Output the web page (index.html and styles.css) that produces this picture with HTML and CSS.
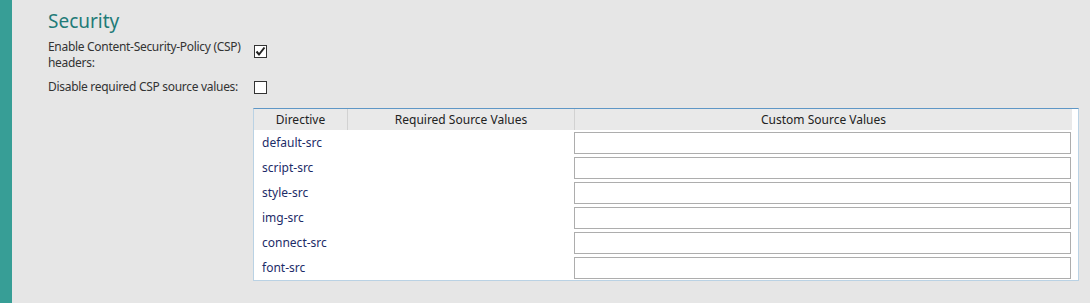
FILE: index.html
```html
<!DOCTYPE html>
<html lang="en">
    <head>
        <meta charset="UTF-8" />
        <meta name="viewport" content="width=device-width, initial-scale=1.0" />
        <title>Security</title>
        <link rel="stylesheet" href="styles.css">
    </head>
    <body>
        <div class="page">
            <div class="stripe"></div>
            <div class="content">
                <h2 class="title">Security</h2>

                <div class="field">
                    <label class="field-label" for="csp-enable">Enable Content-Security-Policy (CSP) headers:</label>
                    <span class="check checked" id="csp-enable">
                        <svg width="11" height="11" viewBox="0 0 11 11">
                            <path d="M1.5 5.5 L4 8.5 L9.5 1.5" fill="none" stroke="#222" stroke-width="2"/>
                        </svg>
                    </span>
                </div>

                <div class="field">
                    <label class="field-label" for="csp-disable">Disable required CSP source values:</label>
                    <span class="check" id="csp-disable"></span>
                </div>

                <div class="grid">
                    <div class="grid-head">
                        <div class="col-directive">Directive</div>
                        <div class="col-required">Required Source Values</div>
                        <div class="col-custom">Custom Source Values</div>
                    </div>
                    <div class="grid-row">
                        <div class="col-directive">default-src</div>
                        <div class="col-required"></div>
                        <div class="col-custom"><input type="text" class="source-input"></div>
                    </div>
                    <div class="grid-row">
                        <div class="col-directive">script-src</div>
                        <div class="col-required"></div>
                        <div class="col-custom"><input type="text" class="source-input"></div>
                    </div>
                    <div class="grid-row">
                        <div class="col-directive">style-src</div>
                        <div class="col-required"></div>
                        <div class="col-custom"><input type="text" class="source-input"></div>
                    </div>
                    <div class="grid-row">
                        <div class="col-directive">img-src</div>
                        <div class="col-required"></div>
                        <div class="col-custom"><input type="text" class="source-input"></div>
                    </div>
                    <div class="grid-row">
                        <div class="col-directive">connect-src</div>
                        <div class="col-required"></div>
                        <div class="col-custom"><input type="text" class="source-input"></div>
                    </div>
                    <div class="grid-row">
                        <div class="col-directive">font-src</div>
                        <div class="col-required"></div>
                        <div class="col-custom"><input type="text" class="source-input"></div>
                    </div>
                </div>
            </div>
        </div>
    </body>
</html>
```

FILE: styles.css
```css
body {
    margin: 0;
    background-color: #e6e6e6;
    font-family: "Noto Sans", Arial, sans-serif;
    font-size: 12px;
    color: #333;
}

.page {
    display: flex;
    height: 303px;
}

.stripe {
    width: 12px;
    background-color: #379e96;
    flex-shrink: 0;
}

.content {
    padding-left: 36px;
    flex: 1;
}

.title {
    margin: 9px 0 6px 0;
    font-size: 19px;
    font-weight: normal;
    color: #1f7b78;
    line-height: 24px;
}

.field {
    display: flex;
    align-items: flex-start;
    margin-bottom: 8px;
}

.field-label {
    width: 206px;
    line-height: 16px;
    letter-spacing: -0.3px;
}

.check {
    width: 11px;
    height: 11px;
    border: 1px solid #333;
    background-color: #fff;
    margin-top: 6px;
    display: flex;
    align-items: center;
    justify-content: center;
}

.field + .field .check {
    margin-top: 2px;
}

.grid {
    margin: 13px 0 0 205px;
    width: 818px;
    background-color: #fff;
    border: 1px solid #bad2e4;
    border-top-color: #5f97c6;
    padding-right: 6px;
}

.grid-head,
.grid-row {
    display: flex;
}

.grid-head {
    background-color: #e9e9e9;
    height: 21px;
    line-height: 21px;
    color: #222;
    text-align: center;
}

.grid-head > div + div {
    border-left: 1px solid #d2d2d2;
}

.grid-row {
    height: 25px;
    align-items: center;
    color: #1c2c68;
}

.col-directive {
    width: 93px;
    flex-shrink: 0;
}

.grid-row .col-directive {
    padding-left: 8px;
    box-sizing: border-box;
}

.col-required {
    width: 226px;
    flex-shrink: 0;
}

.col-custom {
    flex: 1;
}

.source-input {
    display: block;
    width: 497px;
    height: 22px;
    margin-left: 1px;
    box-sizing: border-box;
    border: 1px solid #adadad;
    padding: 0 4px;
    background-color: #fff;
}
```
